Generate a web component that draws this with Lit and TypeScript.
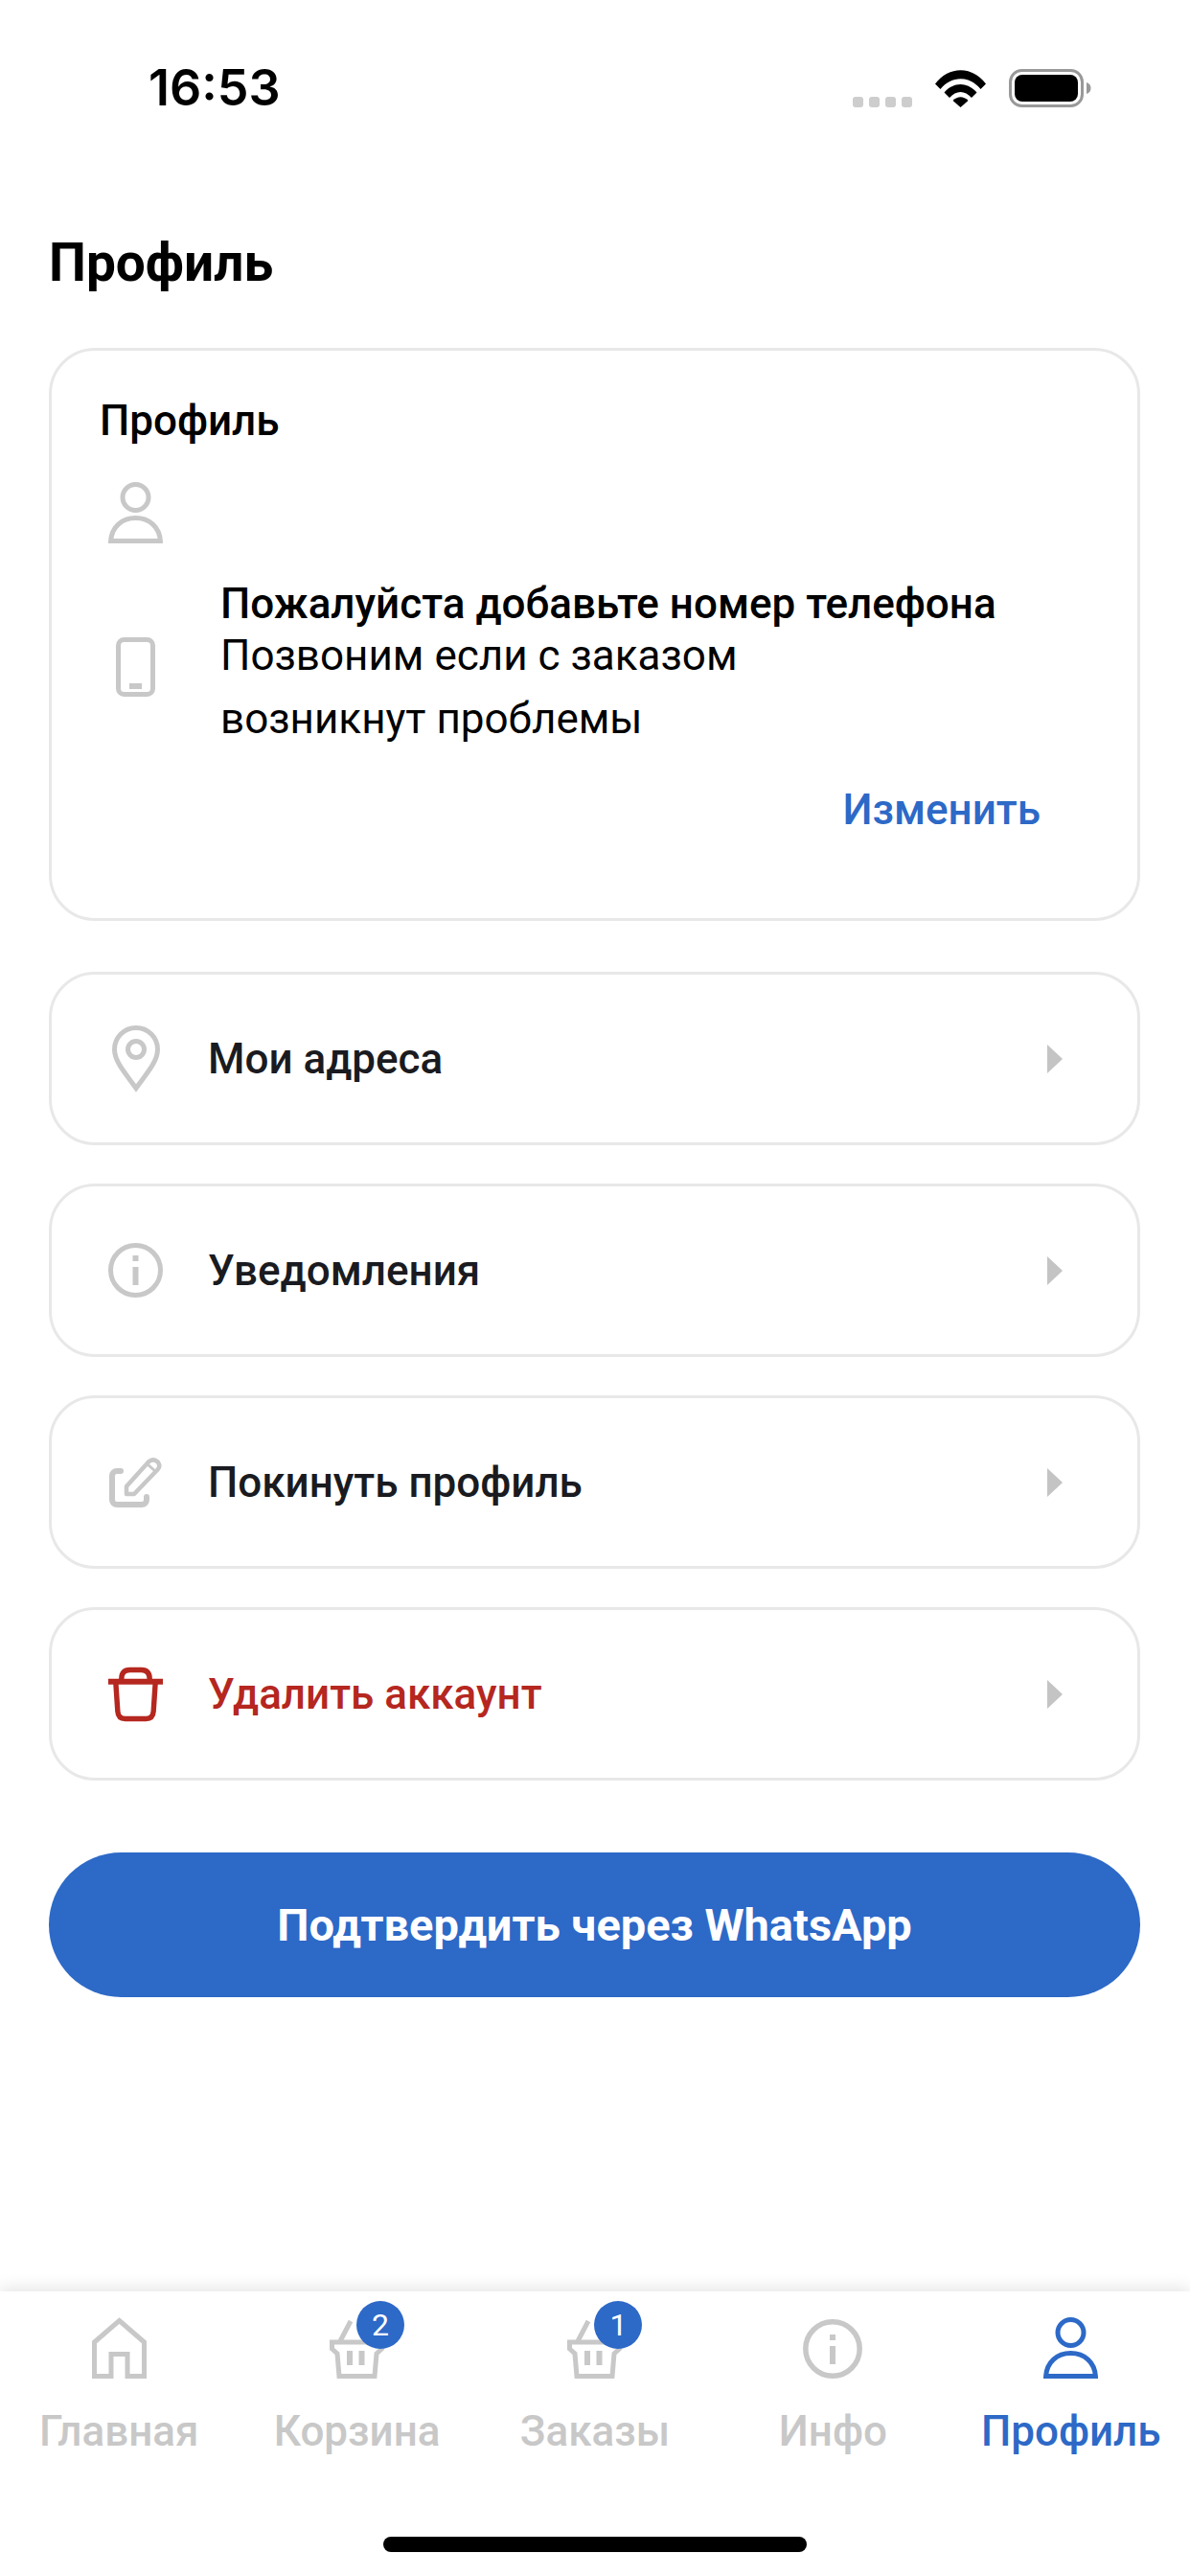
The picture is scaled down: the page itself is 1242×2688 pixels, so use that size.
import { LitElement, html, css } from 'lit';
import { customElement } from 'lit/decorators.js';

const personIcon = html`
  <svg width="57" height="64" viewBox="0 0 57 64" fill="none" stroke="currentColor" stroke-width="5">
    <circle cx="28.5" cy="16" r="13.5"></circle>
    <path d="M2.6 61.5C3.5 47 14 37.5 28.5 37.5S53.5 47 54.4 61.5Z"></path>
  </svg>`;

const phoneIcon = html`
  <svg width="41" height="62" viewBox="0 0 41 62" fill="none" stroke="currentColor" stroke-width="5">
    <rect x="2.5" y="2.5" width="36" height="57" rx="6"></rect>
    <rect x="14" y="48" width="13" height="6" fill="currentColor" stroke="none"></rect>
  </svg>`;

const pinIcon = html`
  <svg width="50" height="70" viewBox="0 0 50 70" fill="none" stroke="currentColor" stroke-width="5">
    <path d="M25 65.5C14 50 2.5 38 2.5 25a22.5 22.5 0 0 1 45 0C47.5 38 36 50 25 65.5Z"></path>
    <circle cx="25" cy="25" r="8.5"></circle>
  </svg>`;

const infoIcon = html`
  <svg width="57" height="57" viewBox="0 0 57 57" fill="none" stroke="currentColor" stroke-width="5">
    <circle cx="28.5" cy="28.5" r="26"></circle>
    <rect x="25.5" y="13" width="6" height="6" fill="currentColor" stroke="none"></rect>
    <rect x="25.5" y="25" width="6" height="19" fill="currentColor" stroke="none"></rect>
  </svg>`;

const editIcon = html`
  <svg width="55" height="53" viewBox="0 0 55 53" fill="none" stroke="currentColor" stroke-width="4.5" stroke-linejoin="round">
    <path d="M12 15H8a5 5 0 0 0-5 5v25a5 5 0 0 0 5 5h26a5 5 0 0 0 5-5v-3" stroke-width="6" stroke-linecap="round"></path>
    <path d="M18 39v-8L41 5.500q4.500-4 9-.500 4.500 4 .500 8.500L26 39Z"></path>
    <path d="M40 8l9 8" stroke-width="3"></path>
  </svg>`;

const trashIcon = html`
  <svg width="58" height="58" viewBox="0 0 58 58" fill="none" stroke="currentColor" stroke-width="5.500">
    <path d="M0 15.500H58" stroke-width="6"></path>
    <path d="M14 13Q14 3 23 3H35Q44 3 44 13"></path>
    <path d="M8 17L10 47Q10.500 55 18 55H40Q47.500 55 48 47L50 17"></path>
  </svg>`;

const homeIcon = html`
  <svg width="57" height="64" viewBox="0 0 57 64" fill="none" stroke="currentColor" stroke-width="5">
    <path d="M28.500 3.500L54.500 26V61.500H37V38.500H20V61.500H2.500V26Z"></path>
  </svg>`;

const basketIcon = html`
  <svg width="57" height="62" viewBox="0 0 57 62" fill="none" stroke="currentColor" stroke-width="5">
    <path d="M22 2L11 23M35 2L46 23"></path>
    <path d="M2.500 24H54.500V31L49 36L47 59.500H10L8 36L2.500 31Z"></path>
    <path d="M21 33V48M33.500 33V48" stroke-width="6"></path>
  </svg>`;

const tabInfoIcon = html`
  <svg width="62" height="62" viewBox="0 0 62 62" fill="none" stroke="currentColor" stroke-width="5.500">
    <circle cx="31" cy="31" r="28.200"></circle>
    <rect x="28" y="16" width="6" height="6" fill="currentColor" stroke="none"></rect>
    <rect x="28" y="28" width="6" height="19" fill="currentColor" stroke="none"></rect>
  </svg>`;

const rows = [
  { icon: pinIcon, label: 'Мои адреса', danger: false },
  { icon: infoIcon, label: 'Уведомления', danger: false },
  { icon: editIcon, label: 'Покинуть профиль', danger: false },
  { icon: trashIcon, label: 'Удалить аккаунт', danger: true },
];

const tabs = [
  { icon: homeIcon, label: 'Главная', badge: '', active: false },
  { icon: basketIcon, label: 'Корзина', badge: '2', active: false },
  { icon: basketIcon, label: 'Заказы', badge: '1', active: false },
  { icon: tabInfoIcon, label: 'Инфо', badge: '', active: false },
  { icon: personIcon, label: 'Профиль', badge: '', active: true },
];

@customElement('app-root')
export class AppRoot extends LitElement {
  static styles = css`
    :host {
      display: flex;
      flex-direction: column;
      width: 1242px;
      height: 2688px;
      background: #fff;
      font-family: Roboto, "Noto Sans", sans-serif;
      color: #000;
      overflow: hidden;
    }

    .status {
      display: flex;
      justify-content: space-between;
      align-items: flex-end;
      height: 40px;
      margin-top: 72px;
      padding: 0 103px 0 155px;
    }
    .time {
      font-family: Inter, sans-serif;
      font-size: 52px;
      font-weight: 600;
      line-height: 40px;
    }
    .status-icons {
      display: flex;
      align-items: flex-end;
    }
    .dots {
      display: flex;
      gap: 6px;
      margin-right: 24px;
    }
    .dots span {
      width: 11px;
      height: 11px;
      border-radius: 3px;
      background: #cdcdcd;
    }
    .wifi {
      display: block;
      margin-right: 24px;
    }
    .battery {
      display: block;
    }

    .title {
      margin: 130px 0 57px 51px;
      font-size: 55px;
      font-weight: 700;
      line-height: 64px;
    }

    .content {
      display: flex;
      flex-direction: column;
      margin: 0 52px 0 51px;
    }

    .card {
      box-sizing: border-box;
      border: 3px solid #e8e8e8;
      border-radius: 48px;
    }
    .profile {
      height: 598px;
      padding: 47px 101px 0 50px;
      margin-bottom: 53px;
      font-size: 44px;
    }
    .card-title {
      font-weight: 500;
      line-height: 52px;
    }
    .slot {
      display: flex;
      justify-content: center;
      align-items: center;
      flex: none;
      width: 57px;
      color: #c8c8c8;
    }
    .profile .slot {
      margin-left: 9px;
    }
    .user {
      margin-top: 38px;
    }
    .phone {
      display: flex;
      align-items: center;
      gap: 60px;
      margin-top: 42px;
    }
    .phone-title {
      font-weight: 500;
      line-height: 42px;
    }
    .phone-text {
      line-height: 66px;
    }
    .edit {
      margin-top: 36px;
      font-weight: 500;
      line-height: 52px;
      text-align: right;
      color: #2d69c7;
    }

    .rows {
      display: flex;
      flex-direction: column;
      gap: 40px;
    }
    .row {
      display: flex;
      align-items: center;
      height: 181px;
      padding: 0 78px 0 59px;
      font-size: 44px;
      font-weight: 500;
      color: #1a1b20;
    }
    .row.danger {
      color: #b5271f;
    }
    .row.danger .slot {
      color: #b5271f;
    }
    .row-label {
      flex: 1;
      margin-left: 47px;
    }
    .chevron {
      width: 0;
      height: 0;
      border-style: solid;
      border-width: 15px 0 15px 16px;
      border-color: transparent transparent transparent #c4c4c4;
    }

    .confirm {
      display: block;
      height: 151px;
      margin-top: 75px;
      border: none;
      border-radius: 76px;
      background: #2d69c7;
      color: #fff;
      font-family: inherit;
      font-size: 47px;
      font-weight: 700;
    }

    .nav {
      margin-top: auto;
      height: 297px;
      background: #fff;
      box-shadow: 0 -4px 16px rgba(0, 0, 0, 0.1);
    }
    .tabs {
      display: grid;
      grid-template-columns: repeat(5, 1fr);
      padding-top: 27px;
    }
    .tab {
      display: flex;
      flex-direction: column;
      align-items: center;
      color: #c8c8c8;
    }
    .tab.active {
      color: #2d69c7;
    }
    .tab-icon {
      position: relative;
      display: flex;
      align-items: flex-end;
      height: 64px;
    }
    .badge {
      position: absolute;
      top: -17px;
      left: 28px;
      width: 50px;
      height: 50px;
      border-radius: 50%;
      background: #2d69c7;
      color: #fff;
      font-size: 32px;
      line-height: 50px;
      text-align: center;
    }
    .tab-label {
      margin-top: 29px;
      font-size: 44px;
      font-weight: 500;
      line-height: 52px;
    }
    .home-bar {
      width: 442px;
      height: 16px;
      margin: 84px auto 0;
      border-radius: 8px;
      background: #000;
    }
  `;

  render() {
    return html`
      <div class="status">
        <div class="time">16:53</div>
        <div class="status-icons">
          <div class="dots"><span></span><span></span><span></span><span></span></div>
          <svg class="wifi" width="53" height="39" viewBox="0 0 53 39">
            <path d="M0 14.500C14.500 -4.500 38.500 -4.500 53 14.500L47.500 20C36 5.500 17 5.500 5.500 20Z"></path>
            <path d="M9.500 23.500C19 12 34 12 43.500 23.500L38 29C31 21 22 21 15 29Z"></path>
            <path d="M18.500 32C23.500 27 29.500 27 34.500 32L26.500 39Z"></path>
          </svg>
          <svg class="battery" width="86" height="40" viewBox="0 0 86 40">
            <rect x="1.500" y="1.500" width="75" height="37" rx="12" fill="none" stroke="#999" stroke-width="3"></rect>
            <rect x="6" y="6" width="66" height="28" rx="8"></rect>
            <path d="M81 14C84 15 85.500 17 85.500 20S84 25 81 26Z" fill="#999"></path>
          </svg>
        </div>
      </div>

      <div class="title">Профиль</div>

      <div class="content">
        <div class="card profile">
          <div class="card-title">Профиль</div>
          <div class="slot user">${personIcon}</div>
          <div class="phone">
            <div class="slot">${phoneIcon}</div>
            <div>
              <div class="phone-title">Пожалуйста добавьте номер телефона</div>
              <div class="phone-text">Позвоним если с заказом<br />возникнут проблемы</div>
            </div>
          </div>
          <div class="edit">Изменить</div>
        </div>

        <div class="rows">
          ${rows.map(
            (row) => html`
              <div class="card row ${row.danger ? 'danger' : ''}">
                <div class="slot">${row.icon}</div>
                <div class="row-label">${row.label}</div>
                <div class="chevron"></div>
              </div>
            `
          )}
        </div>

        <button class="confirm">Подтвердить через WhatsApp</button>
      </div>

      <div class="nav">
        <div class="tabs">
          ${tabs.map(
            (tab) => html`
              <div class="tab ${tab.active ? 'active' : ''}">
                <div class="tab-icon">
                  ${tab.icon}
                  ${tab.badge ? html`<div class="badge">${tab.badge}</div>` : ''}
                </div>
                <div class="tab-label">${tab.label}</div>
              </div>
            `
          )}
        </div>
        <div class="home-bar"></div>
      </div>
    `;
  }
}
